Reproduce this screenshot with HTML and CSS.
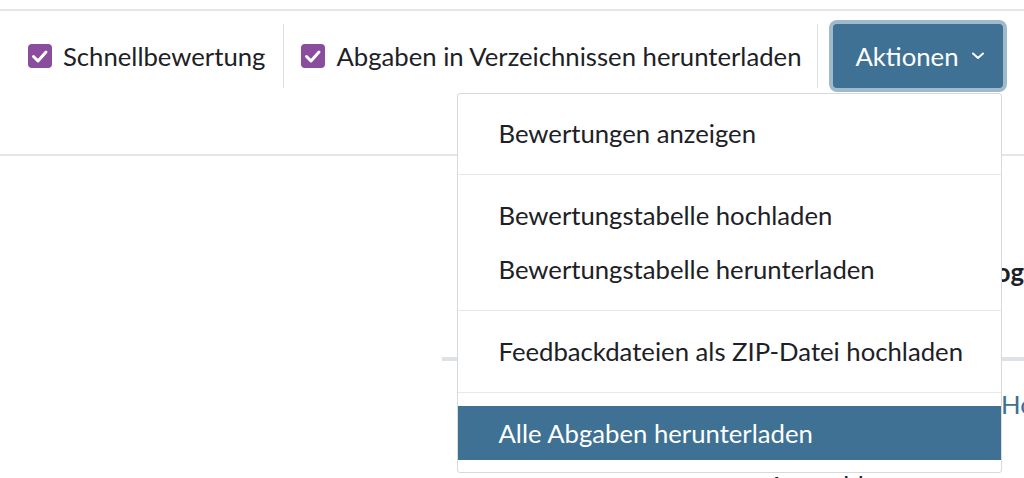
FILE: index.html
```html
<!DOCTYPE html>
<html lang="de">

<head>
  <meta charset="UTF-8">
  <meta name="viewport" content="width=device-width, initial-scale=1.0">
  <title>Abgaben</title>
  <link rel="stylesheet" href="styles.css">
</head>

<body>

  <div class="toolbar">
    <div class="toolbar-row">
      <label class="option first">
        <span class="check">
          <svg viewBox="0 0 24 24" width="24" height="24"><polyline points="5.5,12.5 10,17 18,8" /></svg>
        </span>
        Schnellbewertung
      </label>
      <label class="option">
        <span class="check">
          <svg viewBox="0 0 24 24" width="24" height="24"><polyline points="5.5,12.5 10,17 18,8" /></svg>
        </span>
        Abgaben in Verzeichnissen herunterladen
      </label>
      <div class="actions">
        <button type="button" class="actions-btn">
          Aktionen
          <svg class="chevron" viewBox="0 0 14 8" width="14" height="8"><polyline points="2,1.5 7,6 12,1.5" /></svg>
        </button>
        <!-- Actions menu (open) -->
        <div class="menu">
          <a class="menu-item" href="#">Bewertungen anzeigen</a>
          <div class="menu-divider"></div>
          <a class="menu-item" href="#">Bewertungstabelle hochladen</a>
          <a class="menu-item" href="#">Bewertungstabelle herunterladen</a>
          <div class="menu-divider"></div>
          <a class="menu-item" href="#">Feedbackdateien als ZIP-Datei hochladen</a>
          <div class="menu-divider"></div>
          <a class="menu-item active" href="#">Alle Abgaben herunterladen</a>
        </div>
      </div>
    </div>
  </div>

  <div class="content">
    <h3 class="content-title">Bewertungsdialog</h3>
    <div class="content-rule"></div>
    <div class="content-cell"></div>
    <a class="content-link" href="#">Hochladen</a>
    <div class="content-foot">Auswahl</div>
  </div>

</body>

</html>
```

FILE: styles.css
```css
body {
  margin: 0;
  padding-top: 9px;
  font-family: Lato, "Liberation Sans", sans-serif;
  font-size: 25.7px;
  color: #1d2125;
  background-color: #fff;
  overflow: hidden;
}

.toolbar {
  border-top: 2px solid #e3e5e8;
  border-bottom: 2px solid #e3e5e8;
  padding: 13px 0 66px 28px;
}

.toolbar-row {
  display: flex;
  align-items: center;
}

.option {
  display: flex;
  align-items: center;
  gap: 11px;
  height: 64px;
  padding: 0 16px 0 17px;
  border-left: 1px solid #dcdfe3;
  white-space: nowrap;
}

.option.first {
  padding-left: 0;
  padding-right: 18px;
  border-left: none;
}

.check {
  display: block;
  width: 24px;
  height: 24px;
  border-radius: 4px;
  background-color: #8b4c9e;
}

.check svg {
  display: block;
  fill: none;
  stroke: #fff;
  stroke-width: 3;
  stroke-linecap: round;
  stroke-linejoin: round;
}

.actions {
  position: relative;
  padding-left: 15px;
  border-left: 1px solid #dcdfe3;
  height: 64px;
}

.actions-btn {
  display: flex;
  align-items: center;
  gap: 12px;
  height: 64px;
  width: 170px;
  padding: 0 0 0 22px;
  border: none;
  border-radius: 4px;
  background-color: #3e7193;
  box-shadow: 0 0 0 4px #a0b9cb;
  color: #fff;
  font-family: inherit;
  font-size: 25.7px;
  cursor: pointer;
}

.chevron {
  fill: none;
  stroke: #fff;
  stroke-width: 2;
  stroke-linecap: round;
  stroke-linejoin: round;
}

.menu {
  position: absolute;
  top: 69px;
  right: 1px;
  width: 543px;
  padding: 12px 0;
  background-color: #fff;
  border: 1px solid #d6d9dd;
  border-radius: 3px;
  z-index: 10;
}

.menu-item {
  display: block;
  padding: 9px 40px;
  line-height: 36px;
  color: #1d2125;
  text-decoration: none;
  white-space: nowrap;
}

.menu-item.active {
  background-color: #3e7193;
  color: #fff;
}

.menu-divider {
  height: 1px;
  margin: 13.5px 0;
  background-color: #e6e8eb;
}

.content {
  display: grid;
  grid-template-columns: 558px minmax(0, 1fr);
  margin-left: 442px;
  overflow: hidden;
}

.content-title {
  grid-column: 1 / 3;
  margin: 98px 0 0;
  font-size: 25.7px;
  line-height: 36px;
  font-weight: bold;
  text-align: right;
  white-space: nowrap;
}

.content-rule {
  grid-column: 1 / 3;
  height: 4px;
  margin-top: 67px;
  background-color: #dee2e6;
}

.content-link {
  margin-top: 25px;
  padding-left: 1px;
  line-height: 36px;
  color: #3e7193;
  text-decoration: none;
  white-space: nowrap;
  overflow: hidden;
}

.content-foot {
  grid-column: 1 / 3;
  margin-top: 45px;
  padding-left: 326px;
  line-height: 36px;
}
```
